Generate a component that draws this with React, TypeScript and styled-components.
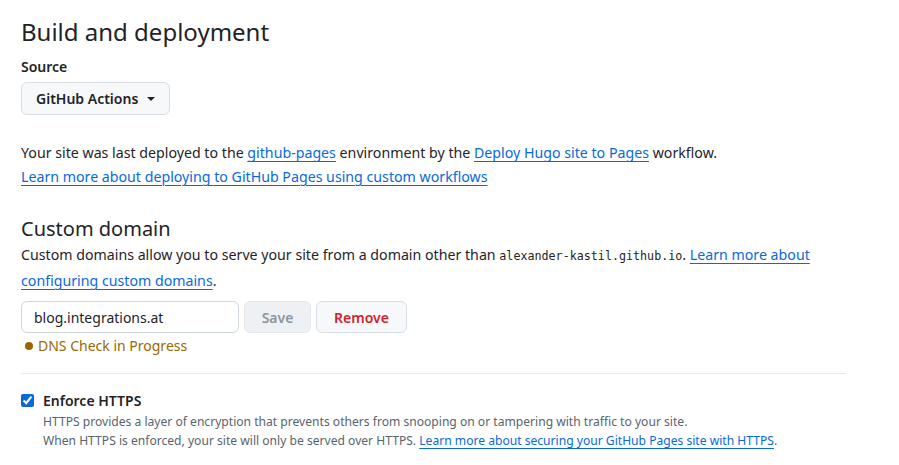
import React from "react";
import styled, { createGlobalStyle } from "styled-components";

const Global = createGlobalStyle`
  html, body { margin: 0; padding: 0; background: #ffffff; }
  body {
    font-family: "Noto Sans", "Open Sans", sans-serif;
    color: #1f2328;
    font-size: 14px;
    line-height: 23px;
  }
`;

const Page = styled.div`
  width: 899px;
  height: 465px;
  box-sizing: border-box;
  padding: 16px 53px 0 21px;
  overflow: hidden;
`;

const H2 = styled.h2<{ $size: number }>`
  margin: 0;
  font-size: ${(p) => p.$size}px;
  font-weight: 400;
  line-height: 1.3;
  color: #1f2328;
`;

const Label = styled.div`
  font-weight: 600;
  font-size: 14px;
  margin-top: 10px;
  line-height: 20px;
`;

const DropButton = styled.button`
  margin-top: 5px;
  display: inline-flex;
  align-items: center;
  gap: 9px;
  height: 33px;
  padding: 0 14px;
  background: #f6f8fa;
  border: 1px solid #d8dee4;
  border-radius: 6px;
  font-family: inherit;
  font-size: 14px;
  font-weight: 600;
  color: #1f2328;
`;

const Caret = styled.span`
  width: 0;
  height: 0;
  border-left: 4px solid transparent;
  border-right: 4px solid transparent;
  border-top: 4px solid #1f2328;
`;

const Para = styled.p<{ $top: number }>`
  margin: ${(p) => p.$top}px 0 0;
  font-size: 14.2px;
  line-height: 23.5px;
`;

const Link = styled.a`
  color: #0969da;
  text-decoration: underline;
  text-underline-offset: 3px;
  text-decoration-thickness: 1px;
`;

const Code = styled.code`
  font-family: "DejaVu Sans Mono", "Liberation Mono", monospace;
  font-size: 11.7px;
`;

const Section = styled.div<{ $top: number }>`
  margin-top: ${(p) => p.$top}px;
`;

const FormRow = styled.div`
  display: flex;
  gap: 5px;
  margin-top: 9px;
`;

const Input = styled.input`
  box-sizing: border-box;
  width: 218px;
  height: 32px;
  padding: 0 12px;
  border: 1px solid #d0d7de;
  border-radius: 6px;
  font-family: inherit;
  font-size: 14px;
  color: #1f2328;
  outline: none;
`;

const Btn = styled.button<{ $danger?: boolean; $disabled?: boolean; $w: number }>`
  box-sizing: border-box;
  width: ${(p) => p.$w}px;
  height: 32px;
  border-radius: 6px;
  border: 1px solid ${(p) => (p.$disabled ? "#e5e9ed" : "#d8dee4")};
  background: ${(p) => (p.$disabled ? "#eef1f4" : "#f6f8fa")};
  color: ${(p) => (p.$danger ? "#cf222e" : p.$disabled ? "#8c959f" : "#1f2328")};
  font-family: inherit;
  font-size: 14px;
  font-weight: 600;
`;

const Status = styled.div`
  display: flex;
  align-items: center;
  gap: 5px;
  margin-top: 1px;
  color: #9a6700;
  font-size: 14px;
  line-height: 23px;
  padding-left: 4px;
`;

const Dot = styled.span`
  width: 8px;
  height: 8px;
  border-radius: 50%;
  background: #9a6700;
`;

const Divider = styled.hr`
  border: 0;
  border-top: 1px solid #e7eaee;
  margin: 16px 0 0;
  width: 825px;
`;

const CheckRow = styled.div`
  display: flex;
  gap: 9px;
  margin-top: 15px;
`;

const Check = styled.input`
  margin: 5px 0 0;
  width: 13px;
  height: 13px;
  accent-color: #0969da;
`;

const CheckBody = styled.div`
  display: flex;
  flex-direction: column;
`;

const CheckTitle = styled.div`
  font-weight: 600;
  font-size: 14px;
  line-height: 23px;
`;

const Note = styled.div`
  color: #59636e;
  font-size: 12.1px;
  line-height: 19px;
`;

export default function App() {
  return (
    <>
      <Global />
      <Page>
        <H2 $size={24}>Build and deployment</H2>
        <Label>Source</Label>
        <DropButton>
          GitHub Actions <Caret />
        </DropButton>
        <Para $top={26}>
          Your site was last deployed to the <Link href="#">github-pages</Link>{" "}
          environment by the <Link href="#">Deploy Hugo site to Pages</Link> workflow.
          <br />
          <Link href="#">Learn more about deploying to GitHub Pages using custom workflows</Link>
        </Para>
        <Section $top={28}>
          <H2 $size={20}>Custom domain</H2>
          <Para $top={1}>
            Custom domains allow you to serve your site from a domain other than{" "}
            <Code>alexander-kastil.github.io</Code>. <Link href="#">Learn more about</Link>
            <br />
            <Link href="#">configuring custom domains</Link>.
          </Para>
          <FormRow>
            <Input defaultValue="blog.integrations.at" />
            <Btn $disabled $w={67}>Save</Btn>
            <Btn $danger $w={91}>Remove</Btn>
          </FormRow>
          <Status>
            <Dot />
            DNS Check in Progress
          </Status>
        </Section>
        <Divider />
        <CheckRow>
          <Check type="checkbox" defaultChecked />
          <CheckBody>
            <CheckTitle>Enforce HTTPS</CheckTitle>
            <Note>
              HTTPS provides a layer of encryption that prevents others from snooping on or tampering with traffic to your site.
              <br />
              When HTTPS is enforced, your site will only be served over HTTPS.{" "}
              <Link href="#">Learn more about securing your GitHub Pages site with HTTPS</Link>.
            </Note>
          </CheckBody>
        </CheckRow>
      </Page>
    </>
  );
}
